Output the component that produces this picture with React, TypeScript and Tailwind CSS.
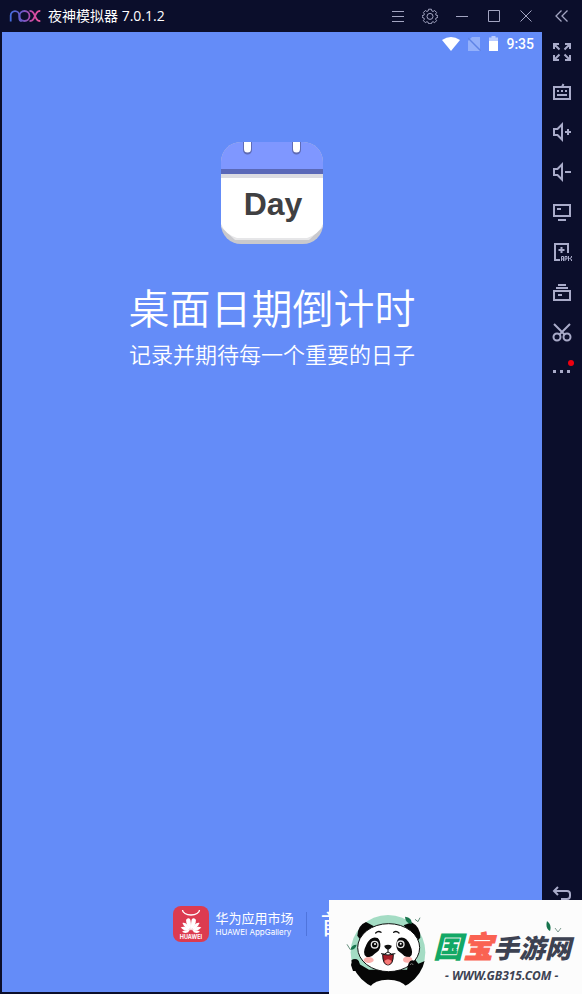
import { ReactNode } from 'react';

function TitleButton({ label, children }: { label: string; children: ReactNode }) {
  return (
    <button aria-label={label} className="flex h-8 w-8 items-center justify-center">
      <svg width="16" height="16" viewBox="0 0 16 16" fill="none" stroke="#a3a5c2" strokeWidth="1">
        {children}
      </svg>
    </button>
  );
}

function SideButton({ label, children }: { label: string; children: ReactNode }) {
  return (
    <button aria-label={label} className="relative flex h-10 w-10 items-center justify-center">
      <svg className="overflow-visible" width="20" height="20" viewBox="0 0 20 20" fill="none" stroke="#a9abc9" strokeWidth="2">
        {children}
      </svg>
    </button>
  );
}

function NoxLogo() {
  return (
    <svg width="32" height="14" viewBox="0 0 32 14" fill="none" strokeWidth="1.8">
      <defs>
        <linearGradient id="nox" x1="0" y1="0" x2="32" y2="0" gradientUnits="userSpaceOnUse">
          <stop offset="0" stopColor="#3f6fe0" />
          <stop offset="0.45" stopColor="#7257c4" />
          <stop offset="0.75" stopColor="#d0489f" />
          <stop offset="1" stopColor="#ee5aa0" />
        </linearGradient>
      </defs>
      <g stroke="url(#nox)">
        <path d="M1.7 12.500V6.500a4.300 4.300 0 0 1 8.600 0V9q0 3 2.500 3" />
        <circle cx="15.500" cy="7" r="5" />
        <path d="M20.500 1.800q3 0 4.200 2.500L26 7l1.300-2.700Q28.500 1.800 31.300 1.800M20.500 12.200q3 0 4.200-2.500L26 7l1.300 2.700q1.200 2.500 4 2.500" />
      </g>
    </svg>
  );
}

function TitleBar() {
  return (
    <header className="flex h-8 items-center bg-[#0b0e2b]">
      <div className="flex flex-1 items-center gap-[7px] pl-[9px]">
        <NoxLogo />
        <h1 className="font-['Open_Sans','Noto_Sans_CJK_SC',sans-serif] text-[14px] leading-5 whitespace-nowrap text-white">
          夜神模拟器 7.0.1.2
        </h1>
      </div>
      <TitleButton label="菜单">
        <path d="M2 3.500h12M2 8.500h12M2 13.500h12" />
      </TitleButton>
      <TitleButton label="设置">
        <path d="M6.600 1.200h2.800l.4 1.700 1.300.6 1.500-1 2 2-1 1.500.5 1.200 1.700.4v1.800l-1.700.6-.5 1.200 1 1.500-2 2-1.500-1-1.300.6-.4 1.400H6.600l-.4-1.400-1.300-.6-1.500 1-2-2 1-1.500-.5-1.200L.2 9.400V7.600l1.700-.4.5-1.200-1-1.500 2-2 1.500 1 1.300-.6z" strokeLinejoin="round" />
        <circle cx="8" cy="8.400" r="3" />
      </TitleButton>
      <TitleButton label="最小化">
        <path d="M2 8.500h12" />
      </TitleButton>
      <TitleButton label="最大化">
        <path d="M2.500 2.500h11v11h-11z" />
      </TitleButton>
      <TitleButton label="关闭">
        <path d="M2.500 2.500l11 11M13.500 2.500l-11 11" />
      </TitleButton>
      <div className="flex w-10 justify-center">
        <TitleButton label="收起">
          <path d="M7.500 2.500L2 8l5.500 5.500M13.500 2.500L8 8l5.500 5.500" strokeWidth="1.300" />
        </TitleButton>
      </div>
    </header>
  );
}

function SideBar() {
  return (
    <nav className="flex w-10 shrink-0 flex-col bg-[#0b0e2b] pb-[82px]">
      <SideButton label="全屏">
        <path d="M2 7V2h5M2.500 2.500l5 5M13 2h5v5M17.500 2.500l-5 5M2 13v5h5M2.500 17.500l5-5M13 18h5v-5M17.500 17.500l-5-5" />
      </SideButton>
      <SideButton label="键盘">
        <path d="M2 5h16v12H2zM10 5l1.500-3" />
        <path d="M5 9h2M9 9h2M13 9h2M5 13h10" />
      </SideButton>
      <SideButton label="音量加">
        <path d="M10 2.500v15L5.500 13H2V7h3.500zM13 10h6M16 7v6" />
      </SideButton>
      <SideButton label="音量减">
        <path d="M10 2.500v15L5.500 13H2V7h3.500zM13 10h6" />
      </SideButton>
      <SideButton label="显示">
        <path d="M2 3h16v11H2zM5 7h4M6 18h8" />
      </SideButton>
      <SideButton label="安装应用">
        <path d="M8 18H3V2h13v9M9.500 5v6M6.500 8h6" />
        <path d="M9.500 19v-4.500h2V19M9.500 17h2M13 19v-4.500h2V17h-2M16.500 14v5M19.500 14v1.500l-2 1 2 1V19" strokeWidth="1" />
      </SideButton>
      <SideButton label="多开">
        <path d="M2 9h16v9H2zM4 6h12M6 3h8M6 13h4" />
      </SideButton>
      <SideButton label="截图">
        <circle cx="5" cy="15" r="3.500" />
        <circle cx="15" cy="15" r="3.500" />
        <path d="M2 2l10.500 10.500M18 2L7.500 12.500" />
      </SideButton>
      <SideButton label="更多">
        <path d="M1 9.500h3M8 9.500h3M15 9.500h3" strokeWidth="3" />
        <circle cx="19" cy="1" r="3" fill="#ee0010" stroke="none" />
      </SideButton>
      <div className="mt-auto">
        <SideButton label="返回">
          <path d="M6 5L2 9l4 4M2 9h13q3 0 3 3v2q0 3-3 3H9" />
        </SideButton>
      </div>
    </nav>
  );
}

function StatusBar() {
  return (
    <div className="flex h-6 items-center justify-end gap-2 pr-2">
      <svg width="18" height="14" viewBox="0 0 18 14" fill="#fff">
        <path d="M9 14L0 3q9-6 18 0z" />
      </svg>
      <div className="flex items-center gap-2">
        <svg width="13" height="14" viewBox="0 0 13 14">
          <path d="M4 0h8v14H0V4z" fill="#93b0fb" />
          <path d="M0 1l13 13" stroke="#5f83e6" strokeWidth="1.500" />
        </svg>
        <svg width="9" height="16" viewBox="0 0 9 16">
          <path d="M2.500 0h4v1.500H9V6H0V1.500h2.500z" fill="#b9ccff" />
          <path d="M0 5h9v10H0z" fill="#fff" />
        </svg>
      </div>
      <span className="font-[Roboto] text-[14px] leading-5 font-medium text-white">9:35</span>
    </div>
  );
}

function CalendarIcon() {
  return (
    <div className="relative h-[102px] w-[102px]">
      <svg className="absolute inset-0" width="102" height="102" viewBox="0 0 102 102">
        <defs>
          <clipPath id="calendar">
            <rect width="102" height="102" rx="20" />
          </clipPath>
        </defs>
        <g clipPath="url(#calendar)">
          <rect width="102" height="102" fill="#c9c9cd" />
          <path d="M0 30h102v55L88 98H14L0 85z" fill="#e6e6e8" />
          <path d="M0 30h102v52q-4 10-16 14H16Q4 92 0 82z" fill="#fff" />
          <path d="M0 32h102v4H0z" fill="#dcdce2" />
          <path d="M0 0h102v27H0z" fill="#7f97ff" />
          <path d="M0 27h102v5H0z" fill="#5a68b8" />
        </g>
        <path d="M22 0h9v8a4.500 4.500 0 0 1-9 0zM71 0h9v8a4.500 4.500 0 0 1-9 0z" fill="#5f6bb5" />
        <path d="M23 0h7v7a3.500 3.500 0 0 1-7 0zM72 0h7v7a3.500 3.500 0 0 1-7 0z" fill="#fff" />
      </svg>
      <span className="relative flex h-full items-center justify-center pt-[22px] pl-[2px] font-['Liberation_Sans'] text-[32px] leading-10 font-bold text-[#404042]">
        Day
      </span>
    </div>
  );
}

function AppGalleryIcon() {
  return (
    <svg width="36" height="36" viewBox="0 0 36 36">
      <rect width="36" height="36" rx="8" fill="#dc3b50" />
      <path d="M9.500 4a8.500 5 0 0 0 17 0" fill="none" stroke="#fff" strokeWidth="1.300" />
      <g fill="#fff" transform="translate(18 25.500)">
        <path d="M0-1C-2-5-3.200-9-2.200-12.500 0-14.500 2.200-13.500 2-11 1.800-7 1-4 0-1z" transform="rotate(-13)" />
        <path d="M0-1C2-5 3.200-9 2.200-12.500 0-14.500-2.200-13.500-2-11-1.800-7-1-4 0-1z" transform="rotate(13)" />
        <path d="M0-1.500C-2-5-2.600-8-1.500-12 1.500-11 2.300-6 0-1.500z" transform="rotate(-38)" />
        <path d="M0-1.500C2-5 2.600-8 1.500-12-1.500-11-2.300-6 0-1.500z" transform="rotate(38)" />
        <path d="M0-1.500C-2-4-2.600-7-1.200-11 1.800-9 2.300-5 0-1.500z" transform="rotate(-63)" />
        <path d="M0-1.500C2-4 2.600-7 1.200-11-1.800-9-2.300-5 0-1.500z" transform="rotate(63)" />
        <path d="M0-2C-2-4-2-6-.5-9 1-7 1.200-4 0-2z" transform="rotate(-88)" />
        <path d="M0-2C2-4 2-6 .5-9-1-7-1.200-4 0-2z" transform="rotate(88)" />
      </g>
      <text x="18" y="33" textAnchor="middle" fill="#fff" fontSize="5.5" fontWeight="700" fontFamily="Inter">
        HUAWEI
      </text>
    </svg>
  );
}

function Splash() {
  return (
    <main className="flex flex-1 flex-col bg-[#648cf8] text-white">
      <StatusBar />
      <section className="flex flex-col items-center pt-[86px]">
        <CalendarIcon />
        <h2 className="mt-10 text-[41px] leading-12 font-[350] whitespace-nowrap">桌面日期倒计时</h2>
        <p className="mt-2 text-[22px] leading-7 font-[350] whitespace-nowrap">记录并期待每一个重要的日子</p>
      </section>
      <footer className="mt-auto flex items-center justify-center pb-[50px]">
        <AppGalleryIcon />
        <div className="ml-[6px] flex flex-col">
          <span className="text-[13px] leading-4 whitespace-nowrap">华为应用市场</span>
          <span className="font-[Inter] text-[8px] leading-3 whitespace-nowrap">HUAWEI AppGallery</span>
        </div>
        <span className="ml-3 h-6 w-px bg-[#4f74dc]" />
        <span className="ml-[14px] w-[50px] text-[26px] leading-8">首</span>
      </footer>
    </main>
  );
}

function Panda() {
  return (
    <svg width="90" height="89" viewBox="0 0 270 267">
      <defs>
        <clipPath id="disc">
          <circle cx="135" cy="142" r="113" />
        </clipPath>
        <clipPath id="body">
          <path d="M0 0h270v170l-68 76H82L0 190z" />
        </clipPath>
      </defs>
      <circle cx="135" cy="142" r="112" fill="#a4dcc4" clipPath="url(#body)" />
      <path d="M43 92q2-32 26-41l24 13-38 45z" fill="#060606" />
      <path d="M182 61l24-9q27 14 26 46l-10 11z" fill="#060606" />
      <g clipPath="url(#disc)">
        <path d="M22 178q0-16 14-16 12 0 14 16l28 16h116l6-24q8-12 18-4l8 10 24-10q0 50-50 81H68q-44-25-46-69z" fill="#060606" />
      </g>
      <path d="M80 247q14-23 55-23t57 23q-56 18-112 0z" fill="#fcfcfc" />
      <ellipse cx="137" cy="128" rx="93" ry="72" fill="#fff" stroke="#111" strokeWidth="3" />
      <path d="M104 99q-20-8-34 20t0 36q12 6 25-9 16-8 17-22 1-17-8-25zM168 99q20-8 33 20t0 36q-12 6-24-9-16-8-17-22-1-17 8-25z" fill="#080808" />
      <g fill="#080808" stroke="#e8e8e8" strokeWidth="4">
        <circle cx="95" cy="119" r="10" />
        <circle cx="173" cy="118" r="10" />
      </g>
      <g fill="#fff">
        <circle cx="96" cy="117" r="3" />
        <circle cx="173" cy="116" r="3" />
      </g>
      <path d="M98 84q8-8 16-2M152 82q8-6 16 2" fill="none" stroke="#111" strokeWidth="4" strokeLinecap="round" />
      <ellipse cx="77" cy="165" rx="15" ry="9" fill="#fbb1ad" />
      <ellipse cx="194" cy="164" rx="14" ry="9" fill="#fbb1ad" />
      <path d="M124 122q11-6 22 0 0 8-11 12-11-4-11-12z" fill="#111" />
      <path d="M119 148q16 4 32 0 0 32-16 32t-16-32z" fill="#a71f29" stroke="#111" strokeWidth="3" />
      <path d="M124 168q11-10 22 0-4 11-11 11t-11-11z" fill="#f77b78" />
      <path d="M114 146q10 5 21-5 10 10 22 5M135 132v9" fill="none" stroke="#111" strokeWidth="3" />
      <path d="M24 180q2-16 14-16 12 2 12 18l6 16H30z" fill="#060606" />
      <path d="M192 200q2-34 16-34 12 2 12 14l-4 22z" fill="#060606" />
      <path d="M202 180a4 4 0 0 1 8 0" fill="none" stroke="#999" strokeWidth="2" />
      <path d="M186 35q22 2 20 22-19-3-20-22zM22 134q5-16 19-15-4 16-19 15z" fill="#17744d" />
      <path d="M12 118l10 16M216 43l9 7 6-12" fill="none" stroke="#648e7c" strokeWidth="3" />
    </svg>
  );
}

function Watermark() {
  return (
    <aside className="absolute right-0 bottom-0 flex h-[94px] w-[253px] bg-[#fcfcfc] pt-[5px] pl-[14px]">
      <Panda />
      <div className="flex flex-col pt-[22px]">
        <div className="flex items-baseline font-black whitespace-nowrap italic">
          <span className="text-[30px] leading-10 text-[#12a866]">国</span>
          <span className="text-[30px] leading-10 text-[#fa6252] [-webkit-text-stroke:1px_#fa6252]">宝</span>
          <span className="text-[26px] leading-10 text-[#3d4252]">手游网</span>
        </div>
        <span className="pl-3 font-['Noto_Sans'] text-[12px] leading-4 font-bold whitespace-nowrap text-[#3d4252] italic">
          - WWW.GB315.COM -
        </span>
      </div>
      <svg className="absolute top-5 right-5" width="16" height="14" viewBox="0 0 16 14">
        <path d="M1 1q5 4 3 10-5-3-3-10z" fill="#17744d" />
        <path d="M9 8l3 4 3-4" fill="none" stroke="#7f9b90" />
      </svg>
    </aside>
  );
}

export default function App() {
  return (
    <div className="relative flex min-h-screen flex-col bg-[#0b0e2b] font-['Noto_Sans','Noto_Sans_CJK_SC',sans-serif]">
      <TitleBar />
      <div className="flex flex-1">
        <div className="flex flex-1 pb-[2px] pl-[2px]">
          <Splash />
        </div>
        <SideBar />
      </div>
      <Watermark />
    </div>
  );
}
